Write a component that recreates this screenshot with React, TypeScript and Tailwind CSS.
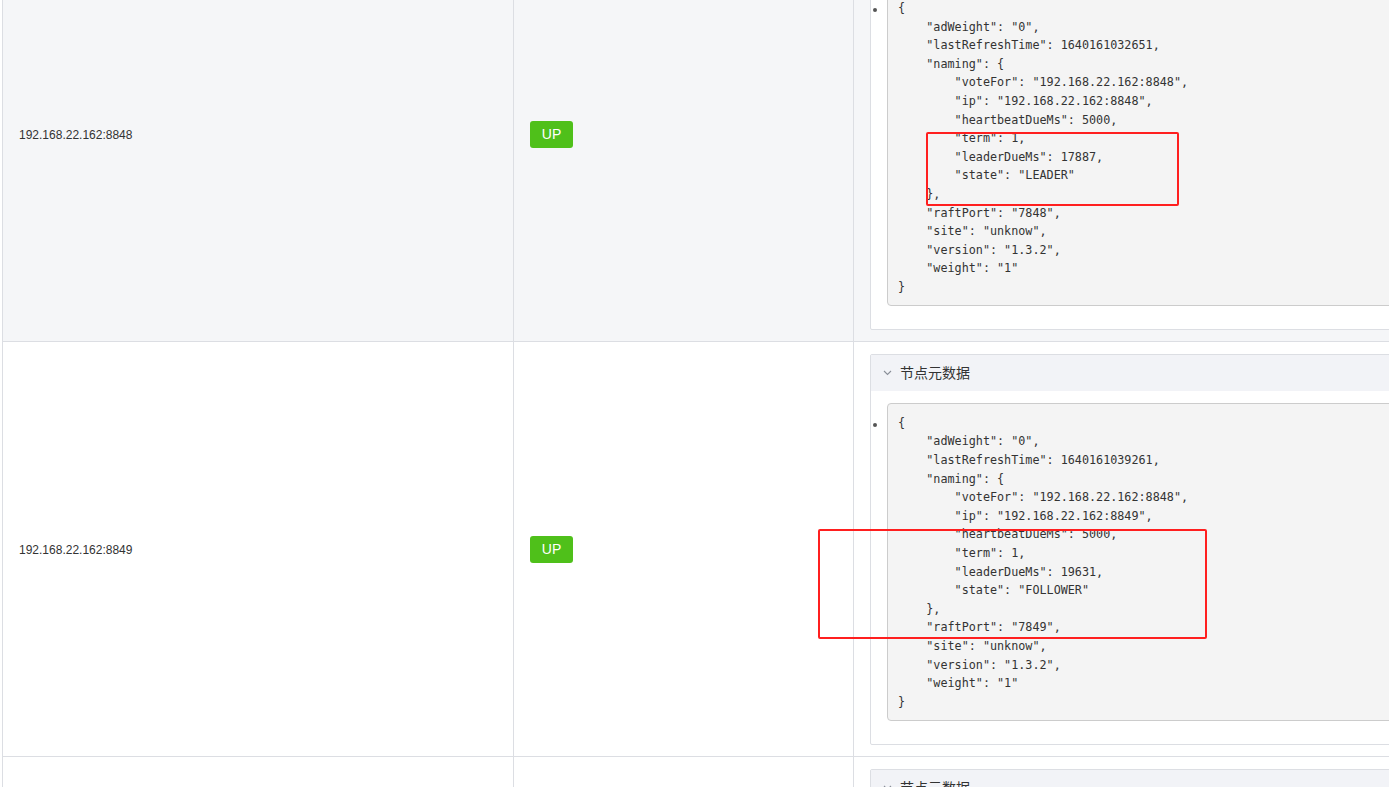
import React from "react";

type Node = {
  addr: string;
  json: string[];
  bg: string;
};

const makeJson = (
  time: string,
  ip: string,
  leaderDue: string,
  state: string,
  raftPort: string
) => [
  "{",
  '    "adWeight": "0",',
  `    "lastRefreshTime": ${time},`,
  '    "naming": {',
  '        "voteFor": "192.168.22.162:8848",',
  `        "ip": "${ip}",`,
  '        "heartbeatDueMs": 5000,',
  '        "term": 1,',
  `        "leaderDueMs": ${leaderDue},`,
  `        "state": "${state}"`,
  "    },",
  `    "raftPort": "${raftPort}",`,
  '    "site": "unknow",',
  '    "version": "1.3.2",',
  '    "weight": "1"',
  "}",
];

const nodes: Node[] = [
  {
    addr: "192.168.22.162:8848",
    json: makeJson("1640161032651", "192.168.22.162:8848", "17887", "LEADER", "7848"),
    bg: "bg-[#f5f6f8]",
  },
  {
    addr: "192.168.22.162:8849",
    json: makeJson("1640161039261", "192.168.22.162:8849", "19631", "FOLLOWER", "7849"),
    bg: "bg-white",
  },
  {
    addr: "192.168.22.162:8850",
    json: makeJson("1640161045873", "192.168.22.162:8850", "18452", "FOLLOWER", "7850"),
    bg: "bg-white",
  },
];

function Chevron() {
  return (
    <svg width="9" height="6" viewBox="0 0 9 6" className="shrink-0">
      <polyline points="1,1 4.5,4.5 8,1" fill="none" stroke="#8a8f99" strokeWidth="1.1" />
    </svg>
  );
}

function Panel({ json }: { json: string[] }) {
  return (
    <div className="border border-[#dcdee3] bg-white rounded-[2px] w-[1500px]">
      <div className="h-[36px] bg-[#f2f3f7] flex items-center pl-[12px] gap-[8px]">
        <Chevron />
        <span
          className="text-[14px] text-[#333333]"
          style={{ fontFamily: '"Noto Sans CJK SC", "Noto Sans", sans-serif' }}
        >
          节点元数据
        </span>
      </div>
      <div className="pt-[12px] pb-[23px] pl-[16px]">
        <div className="relative">
          <span className="absolute left-[-14px] top-[20px] w-[4px] h-[4px] rounded-full bg-[#555555]" />
          <pre
            className="m-0 border border-[#cccccc] rounded-[4px] bg-[#f4f4f4] pt-[10px] pb-[8.4px] pl-[10px] text-[11.75px] leading-[18.6px] text-[#333333] whitespace-pre"
            style={{ fontFamily: '"DejaVu Sans Mono", "Liberation Mono", monospace' }}
          >
            {json.join("\n")}
          </pre>
        </div>
      </div>
    </div>
  );
}

function Row({ node }: { node: Node }) {
  return (
    <div className={`flex border-b border-[#dcdee3] ${node.bg}`}>
      <div
        className="w-[511px] shrink-0 border-r border-[#dcdee3] flex items-center pl-[16px] pt-[2px] text-[12px] text-[#333333]"
        style={{ fontFamily: '"Liberation Sans", Arial, sans-serif' }}
      >
        {node.addr}
      </div>
      <div className="w-[340px] shrink-0 border-r border-[#dcdee3] flex items-center pl-[16px] pt-[2px]">
        <span
          className="inline-flex items-center justify-center w-[43px] h-[27px] rounded-[3px] bg-[#4fc01a] text-white text-[14px]"
          style={{ fontFamily: '"Liberation Sans", Arial, sans-serif' }}
        >
          UP
        </span>
      </div>
      <div className="pl-[16px] pt-[12px] pb-[11px]">
        <Panel json={node.json} />
      </div>
    </div>
  );
}

export default function App() {
  return (
    <div className="relative w-[1389px] h-[787px] overflow-hidden bg-white">
      <div className="mt-[-73px] ml-[2px] w-[2400px] border-l border-[#dcdee3]">
        {nodes.map((n) => (
          <Row key={n.addr} node={n} />
        ))}
      </div>
      <div className="absolute left-[926px] top-[132px] w-[253px] h-[74px] border-2 border-[#ff1f1f] rounded-[2px]" />
      <div className="absolute left-[818px] top-[529px] w-[389px] h-[110px] border-2 border-[#ff1f1f] rounded-[2px]" />
    </div>
  );
}
